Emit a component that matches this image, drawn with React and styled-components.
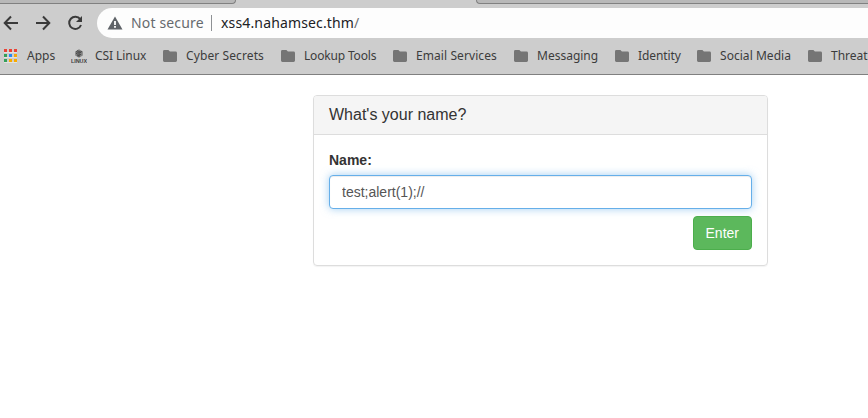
import React from "react";
import styled, { createGlobalStyle } from "styled-components";

const GlobalStyle = createGlobalStyle`
  *, *::before, *::after { box-sizing: border-box; }
  html, body { margin: 0; background: #fff; overflow: hidden; }
  body { font-family: "Liberation Sans", Arial, sans-serif; }
`;

const Window = styled.div`
  width: 868px;
  height: 418px;
  overflow: hidden;
  background: #fff;
`;

const Chrome = styled.header`
  height: 75px;
  background: #cdcdcd;
  border-bottom: 1px solid #808080;
  font-family: "Noto Sans", sans-serif;
`;

const TabStrip = styled.div`
  display: flex;
  justify-content: space-between;
  height: 8px;
  align-items: flex-start;
`;

const InactiveTab = styled.div`
  height: 4px;
  width: ${(p) => p.$width}px;
  background: #b8b8b8;
  border: 0 solid #808080;
  border-bottom-width: 1px;
  ${(p) =>
    p.$side === "left"
      ? "border-right-width: 1px; border-bottom-right-radius: 5px;"
      : "border-left-width: 1px; border-bottom-left-radius: 5px;"}
`;

const Toolbar = styled.div`
  display: flex;
  align-items: center;
  height: 30px;
  padding-left: 3px;
`;

const NavButtons = styled.nav`
  display: flex;
  gap: 16px;
  width: 94px;
  svg { display: block; }
`;

const AddressBar = styled.div`
  flex: 1;
  display: flex;
  align-items: center;
  height: 30px;
  padding-left: 10px;
  background: #fdfdfd;
  border-radius: 15px 0 0 15px;
  font-size: 14px;
  line-height: 20px;
  white-space: nowrap;
`;

const Security = styled.span`
  margin-left: 8px;
  width: 80px;
  letter-spacing: 0.15px;
  color: #666a6e;
`;

const Divider = styled.span`
  width: 1px;
  height: 16px;
  background: #8e9194;
  margin-right: 9px;
`;

const Url = styled.span`
  letter-spacing: 0.15px;
  color: #202124;
  span { color: #6c7074; }
`;

const Bookmarks = styled.div`
  display: flex;
  align-items: center;
  height: 36px;
  padding-left: 4px;
`;

const Bookmark = styled.div`
  display: flex;
  flex: none;
  align-items: center;
  width: ${(p) => p.$width}px;
  font-size: 12px;
  line-height: 18px;
  letter-spacing: ${(p) => p.$tracking ?? 0}px;
  color: #3c3c3c;
  white-space: nowrap;
  svg { display: block; flex: none; margin-right: ${(p) => p.$gap ?? 9}px; }
`;

const Main = styled.main`
  padding: 20px 0 0 313px;
`;

const Panel = styled.section`
  width: 455px;
  height: 171px;
  border: 1px solid #ddd;
  border-radius: 4px;
  box-shadow: 0 1px 1px rgba(0, 0, 0, 0.05);
`;

const PanelHeading = styled.div`
  height: 39px;
  padding: 10px 15px;
  background: #f5f5f5;
  border-bottom: 1px solid #ddd;
  border-radius: 3px 3px 0 0;
`;

const PanelTitle = styled.h3`
  margin: 0;
  font-size: 16px;
  font-weight: 400;
  line-height: 17.6px;
  color: #333;
`;

const PanelBody = styled.form`
  display: flex;
  flex-direction: column;
  padding: 15px;
`;

const Label = styled.label`
  margin-bottom: 5px;
  font-size: 14px;
  font-weight: 700;
  line-height: 20px;
  color: #333;
`;

const Input = styled.input`
  height: 34px;
  padding: 6px 12px;
  border: 1px solid #66afe9;
  border-radius: 4px;
  outline: 0;
  background: #fff;
  box-shadow: inset 0 1px 1px rgba(0, 0, 0, 0.075), 0 0 8px rgba(102, 175, 233, 0.6);
  font: 14px/20px "Liberation Sans", Arial, sans-serif;
  color: #555;
`;

const SubmitButton = styled.button`
  align-self: flex-end;
  height: 34px;
  margin-top: 7px;
  padding: 6px 12px;
  border: 1px solid #4cae4c;
  border-radius: 4px;
  background: #5cb85c;
  font: 14px/20px "Liberation Sans", Arial, sans-serif;
  color: #fff;
`;

const BackIcon = () => (
  <svg width="16" height="16" viewBox="0 0 16 16" fill="none" stroke="#3a3a3a" strokeWidth="2">
    <path d="M15 8H2M8 1.5 1.7 8 8 14.5" />
  </svg>
);

const ForwardIcon = () => (
  <svg width="16" height="16" viewBox="0 0 16 16" fill="none" stroke="#3a3a3a" strokeWidth="2">
    <path d="M1 8h13M8 1.5 14.3 8 8 14.5" />
  </svg>
);

const ReloadIcon = () => (
  <svg width="16" height="16" viewBox="0 0 16 16">
    <path d="M13.2 4.2A6.1 6.1 0 1 0 14 10" fill="none" stroke="#3a3a3a" strokeWidth="2" />
    <path d="M15 1v6H9z" fill="#3a3a3a" />
  </svg>
);

const WarningIcon = () => (
  <svg width="16" height="14" viewBox="0 0 16 14">
    <path d="M8 .5 15.5 13.5H.5z" fill="#5f6368" />
    <path d="M7.1 5h1.8v4H7.1zM7.1 10h1.8v1.8H7.1z" fill="#fff" />
  </svg>
);

const appColors = ["#ea4335", "#ea4335", "#ea4335", "#34a05a", "#2688f5", "#f5a80b", "#34a05a", "#f9ab00", "#f9ab00"];

const AppsIcon = () => (
  <svg width="14" height="14" viewBox="0 0 14 14">
    <path fill="#e2e2e2" d="M0 3h13v1H0zM0 8h13v1H0zM0 13h13v1H0z" />
    {appColors.map((color, i) => (
      <rect key={i} x={(i % 3) * 5} y={Math.floor(i / 3) * 5} width="3" height="3" fill={color} />
    ))}
  </svg>
);

const LinuxIcon = () => (
  <svg width="16" height="14" viewBox="0 0 16 14">
    <path d="M8 .2 11.8 2.4v4.2L8 8.8 4.2 6.600V2.400z" fill="#808080" />
    <g fill="none" stroke="#3f3f3f" strokeWidth=".8">
      <path d="M5 2.400 8 4l3-1.600M8 4v4M6 1.500l4 2M10 5.300 6 7M5 4.200l2 1.200" />
    </g>
    <text x="0" y="13.8" textLength="16" lengthAdjust="spacingAndGlyphs" fontFamily="Liberation Sans, sans-serif" fontSize="5.3" fontWeight="700" fill="#404040">LINUX</text>
  </svg>
);

const FolderIcon = () => (
  <svg width="14" height="12" viewBox="0 0 14 12">
    <path d="M1.4 0h4l1.5 1.5h5.7A1.4 1.4 0 0 1 14 2.9v7.7a1.4 1.4 0 0 1-1.4 1.4H1.4A1.4 1.4 0 0 1 0 10.600V1.400A1.400 1.400 0 0 1 1.400 0z" fill="#757575" />
  </svg>
);

const folders = [
  ["Cyber Secrets", 118, 0.1],
  ["Lookup Tools", 112, -0.17],
  ["Email Services", 121, 0.08],
  ["Messaging", 101, 0],
  ["Identity", 82, -0.1],
  ["Social Media", 111, 0.04],
  ["Threat", 80, 0],
];

export default function App() {
  return (
    <Window>
      <GlobalStyle />
      <Chrome>
        <TabStrip>
          <InactiveTab $width={236} $side="left" />
          <InactiveTab $width={392} $side="right" />
        </TabStrip>
        <Toolbar>
          <NavButtons>
            <BackIcon />
            <ForwardIcon />
            <ReloadIcon />
          </NavButtons>
          <AddressBar>
            <WarningIcon />
            <Security>Not secure</Security>
            <Divider />
            <Url>xss4.nahamsec.thm<span>/</span></Url>
          </AddressBar>
        </Toolbar>
        <Bookmarks>
          <Bookmark $width={67}><AppsIcon />Apps</Bookmark>
          <Bookmark $width={92} $gap={8} $tracking={-0.07}><LinuxIcon />CSI Linux</Bookmark>
          {folders.map(([name, width, tracking]) => (
            <Bookmark key={name} $width={width} $tracking={tracking}><FolderIcon />{name}</Bookmark>
          ))}
        </Bookmarks>
      </Chrome>
      <Main>
        <Panel>
          <PanelHeading>
            <PanelTitle>What's your name?</PanelTitle>
          </PanelHeading>
          <PanelBody>
            <Label htmlFor="name">Name:</Label>
            <Input id="name" defaultValue="test;alert(1);//" spellCheck={false} />
            <SubmitButton type="button">Enter</SubmitButton>
          </PanelBody>
        </Panel>
      </Main>
    </Window>
  );
}
